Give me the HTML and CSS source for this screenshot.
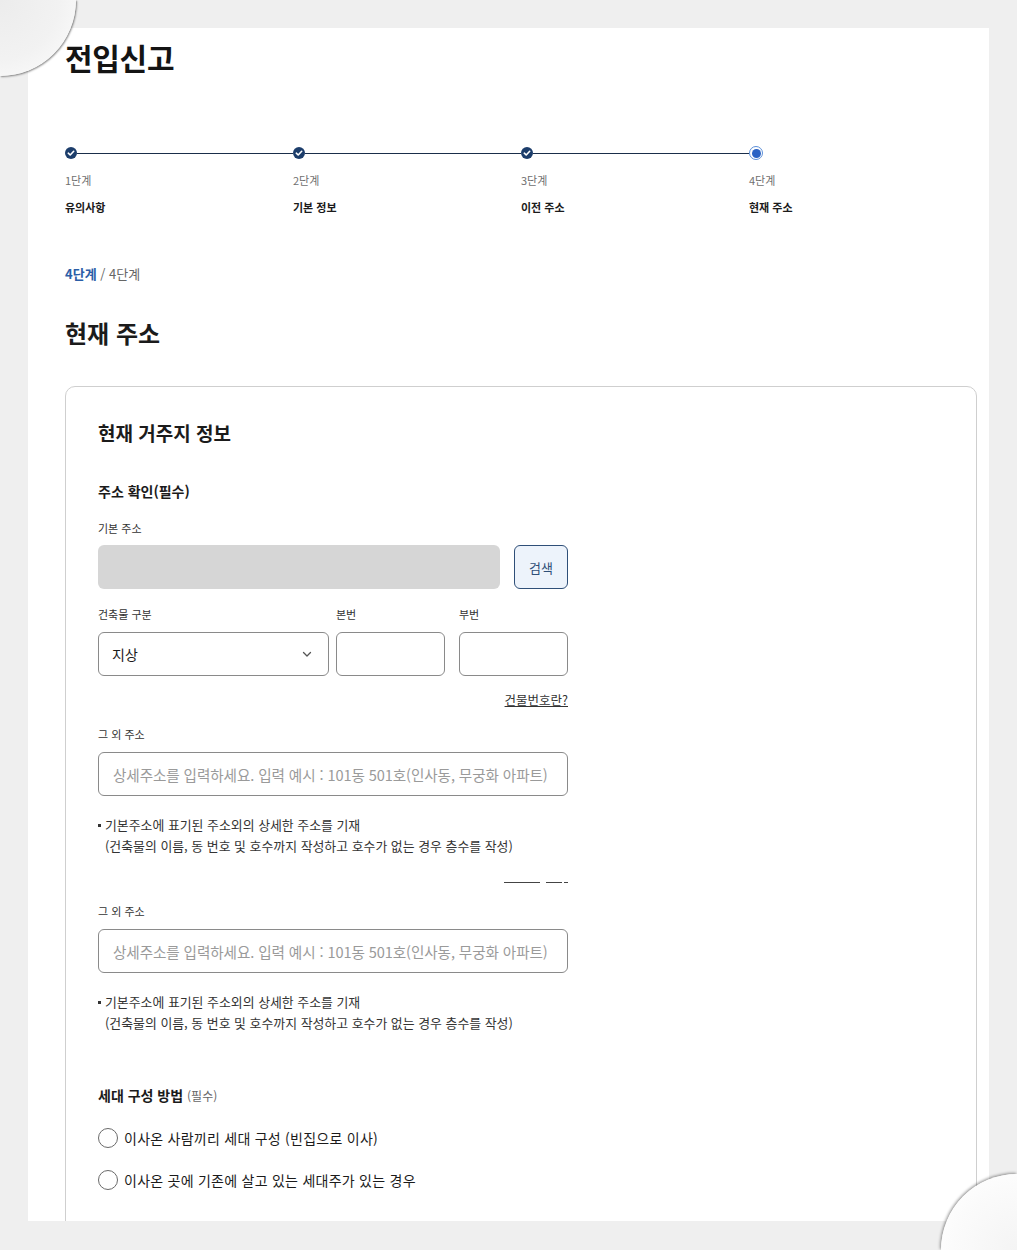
FILE: index.html
```html
<!DOCTYPE html>
<html lang="ko">
<head>
<meta charset="utf-8">
<title>전입신고</title>
<link rel="stylesheet" href="styles.css">
</head>
<body>
<div class="panel">
  <h1 class="title">전입신고</h1>

  <ol class="stepper">
    <li class="step done">
      <div class="track"><span class="dot"><svg viewBox="0 0 12 12" width="12" height="12"><path d="M3.3 6.2 L5.2 8 L8.7 4.3" fill="none" stroke="#fff" stroke-width="1.6" stroke-linecap="round" stroke-linejoin="round"/></svg></span><span class="line"></span></div>
      <div class="step-num">1단계</div>
      <div class="step-name">유의사항</div>
    </li>
    <li class="step done">
      <div class="track"><span class="dot"><svg viewBox="0 0 12 12" width="12" height="12"><path d="M3.3 6.2 L5.2 8 L8.7 4.3" fill="none" stroke="#fff" stroke-width="1.6" stroke-linecap="round" stroke-linejoin="round"/></svg></span><span class="line"></span></div>
      <div class="step-num">2단계</div>
      <div class="step-name">기본 정보</div>
    </li>
    <li class="step done">
      <div class="track"><span class="dot"><svg viewBox="0 0 12 12" width="12" height="12"><path d="M3.3 6.2 L5.2 8 L8.7 4.3" fill="none" stroke="#fff" stroke-width="1.6" stroke-linecap="round" stroke-linejoin="round"/></svg></span><span class="line"></span></div>
      <div class="step-num">3단계</div>
      <div class="step-name">이전 주소</div>
    </li>
    <li class="step current">
      <div class="track"><span class="dot-current"><span class="dot-inner"></span></span></div>
      <div class="step-num">4단계</div>
      <div class="step-name">현재 주소</div>
    </li>
  </ol>

  <div class="progress"><strong>4단계</strong> / 4단계</div>

  <h2 class="page-title">현재 주소</h2>

  <section class="card">
    <h3 class="card-title">현재 거주지 정보</h3>
    <h4 class="group-title">주소 확인(필수)</h4>

    <div class="form">
      <div class="label first">기본 주소</div>
      <div class="addr-row">
        <div class="addr-box"></div>
        <button class="btn-search" type="button">검색</button>
      </div>

      <div class="num-row">
        <div class="col col-select">
          <div class="label">건축물 구분</div>
          <div class="select">
            <span>지상</span>
            <svg viewBox="0 0 12 12" width="12" height="12"><path d="M2.5 4.5 L6 8 L9.5 4.5" fill="none" stroke="#555" stroke-width="1.3" stroke-linecap="round" stroke-linejoin="round"/></svg>
          </div>
        </div>
        <div class="col col-num">
          <div class="label">본번</div>
          <div class="input"></div>
        </div>
        <div class="col col-num">
          <div class="label">부번</div>
          <div class="input"></div>
        </div>
      </div>

      <div class="help-row"><a class="help-link" href="#">건물번호란?</a></div>

      <div class="label other">그 외 주소</div>
      <div class="input wide"><span class="placeholder">상세주소를 입력하세요. 입력 예시 : 101동 501호(인사동, 무궁화 아파트)</span></div>
      <ul class="notes">
        <li>기본주소에 표기된 주소외의 상세한 주소를 기재</li>
        <li class="cont">(건축물의 이름, 동 번호 및 호수까지 작성하고 호수가 없는 경우 층수를 작성)</li>
      </ul>

      <div class="clip-line"></div>

      <div class="label other2">그 외 주소</div>
      <div class="input wide"><span class="placeholder">상세주소를 입력하세요. 입력 예시 : 101동 501호(인사동, 무궁화 아파트)</span></div>
      <ul class="notes">
        <li>기본주소에 표기된 주소외의 상세한 주소를 기재</li>
        <li class="cont">(건축물의 이름, 동 번호 및 호수까지 작성하고 호수가 없는 경우 층수를 작성)</li>
      </ul>

      <div class="household-title">세대 구성 방법 <span class="req">(필수)</span></div>
      <label class="radio"><span class="circle"></span>이사온 사람끼리 세대 구성 (빈집으로 이사)</label>
      <label class="radio"><span class="circle"></span>이사온 곳에 기존에 살고 있는 세대주가 있는 경우</label>
    </div>
  </section>
</div>
<div class="curl curl-tl"></div>
<div class="curl curl-br"></div>
</body>
</html>
```

FILE: styles.css
```css
html, body {
  margin: 0;
  padding: 0;
}
body {
  background: #efefef;
  font-family: "Noto Sans CJK KR", "Noto Sans", sans-serif;
  color: #1b1b1b;
  position: relative;
  height: 1250px;
  overflow: hidden;
}
.panel {
  margin: 28px 28px 0 28px;
  height: 1193px;
  background: #fff;
  overflow: hidden;
  padding: 0 12px 0 37px;
  box-sizing: border-box;
}
.title {
  margin: 0;
  padding-top: 11px;
  font-size: 30px;
  line-height: 36px;
  font-weight: 700;
  letter-spacing: -0.3px;
  color: #141414;
}

/* stepper */
.stepper {
  list-style: none;
  margin: 71px 0 0 0;
  padding: 0;
  display: grid;
  grid-template-columns: repeat(4, 228px);
}
.track {
  display: flex;
  align-items: center;
  height: 14px;
}
.dot {
  width: 12px;
  height: 12px;
  border-radius: 50%;
  background: #1c3d6b;
  flex: none;
  display: flex;
}
.line {
  flex: 1;
  height: 1px;
  background: #1a2e4a;
}
.dot-current {
  width: 12px;
  height: 12px;
  border-radius: 50%;
  border: 1.5px solid #5c8fd8;
  background: #fff;
  display: flex;
  align-items: center;
  justify-content: center;
  margin-left: 0;
}
.dot-inner {
  width: 9px;
  height: 9px;
  border-radius: 50%;
  background: #2a62c4;
}
.step-num {
  margin-top: 11px;
  font-size: 11px;
  line-height: 18px;
  color: #707070;
}
.step-name {
  margin-top: 9px;
  font-size: 11px;
  line-height: 18px;
  font-weight: 700;
  color: #1b1b1b;
}

.progress {
  margin-top: 48px;
  font-size: 13px;
  line-height: 20px;
  color: #666;
}
.progress strong {
  color: #2b5ea7;
  font-weight: 700;
}
.page-title {
  margin: 33px 0 0 0;
  font-size: 24px;
  line-height: 32px;
  font-weight: 700;
  color: #1b1b1b;
}

/* card */
.card {
  margin-top: 37px;
  border: 1px solid #cfcfcf;
  border-radius: 10px;
  padding: 32px 32px 40px 32px;
  height: 1000px;
}
.card-title {
  margin: 0;
  font-size: 19px;
  line-height: 28px;
  font-weight: 700;
  color: #1b1b1b;
}
.group-title {
  margin: 33px 0 0 0;
  font-size: 14px;
  line-height: 22px;
  font-weight: 700;
  color: #1b1b1b;
}
.form {
  width: 470px;
}
.label {
  font-size: 11px;
  line-height: 18px;
  color: #333;
}
.label.first { margin-top: 17px; }
.addr-row {
  margin-top: 8px;
  display: flex;
  gap: 14px;
  height: 44px;
}
.addr-box {
  width: 403px;
  background: #d6d6d6;
  border-radius: 6px;
}
.btn-search {
  width: 54px;
  height: 44px;
  border: 1px solid #2f4f78;
  border-radius: 6px;
  background: #edf3fb;
  color: #2f4f78;
  font-family: inherit;
  font-size: 13px;
  padding: 0;
}
.num-row {
  margin-top: 16px;
  display: flex;
}
.col { display: flex; flex-direction: column; }
.col .label { margin-bottom: 9px; }
.col-select { width: 231px; margin-right: 7px; }
.col-num { width: 109px; }
.col-num + .col-num { margin-left: 14px; }
.select {
  height: 44px;
  box-sizing: border-box;
  border: 1px solid #8a8a8a;
  border-radius: 6px;
  display: flex;
  align-items: center;
  justify-content: space-between;
  padding: 0 15px 0 13px;
  font-size: 14px;
  color: #1b1b1b;
}
.input {
  height: 44px;
  box-sizing: border-box;
  border: 1px solid #8a8a8a;
  border-radius: 6px;
}
.input.wide {
  margin-top: 9px;
  display: flex;
  align-items: center;
  padding-left: 14px;
}
.placeholder {
  font-size: 14.6px;
  color: #9a9a9a;
  letter-spacing: -0.1px;
  white-space: nowrap;
}
.help-row {
  margin-top: 15px;
  display: flex;
  justify-content: flex-end;
  line-height: 18px;
}
.help-link {
  font-size: 12.5px;
  color: #333;
  text-decoration: underline;
}
.label.other { margin-top: 16px; }
.label.other2 { margin-top: 19px; }
.notes {
  list-style: none;
  margin: 18px 0 0 0;
  padding: 0;
  font-size: 12.9px;
  line-height: 21px;
  color: #333;
  white-space: nowrap;
}
.notes li::before {
  content: "";
  display: inline-block;
  width: 3px;
  height: 3px;
  background: #333;
  vertical-align: middle;
  margin-right: 4px;
  position: relative;
  top: -1px;
}
.notes li.cont::before {
  background: transparent;
  margin-right: 4px;
}
.clip-line {
  margin: 26px 0 0 auto;
  width: 64px;
  height: 1px;
  background: linear-gradient(to right, #444 0 36px, transparent 36px 42px, #444 42px 58px, transparent 58px 60px, #444 60px);
}
.household-title {
  margin-top: 52px;
  font-size: 14px;
  line-height: 20px;
  font-weight: 700;
  color: #1b1b1b;
}
.household-title .req {
  font-size: 12px;
  font-weight: 400;
  color: #666;
}
.radio {
  display: flex;
  align-items: center;
  height: 22px;
  margin-top: 21px;
  font-size: 14px;
  letter-spacing: 0.25px;
  color: #1b1b1b;
}
.radio + .radio { margin-top: 20px; }
.circle {
  width: 20px;
  height: 20px;
  box-sizing: border-box;
  border: 1.5px solid #6a6a6a;
  border-radius: 50%;
  margin-right: 6px;
  flex: none;
}

/* page curls */
.curl {
  position: absolute;
  width: 76px;
  height: 76px;
}
.curl-tl {
  left: 0;
  top: 0;
  border-bottom-right-radius: 100%;
  background: radial-gradient(circle at 0 0, #ececec 0%, #f2f2f2 55%, #fbfbfb 88%, #e4e4e4 100%);
  box-shadow: 1px 1px 2px rgba(0,0,0,0.45);
}
.curl-br {
  right: 0;
  bottom: 0;
  border-top-left-radius: 100%;
  background: radial-gradient(circle at 100% 100%, #f4f4f4 0%, #fbfbfb 60%, #ffffff 85%, #e8e8e8 100%);
  box-shadow: -1px -1px 3px rgba(0,0,0,0.4);
}
```
